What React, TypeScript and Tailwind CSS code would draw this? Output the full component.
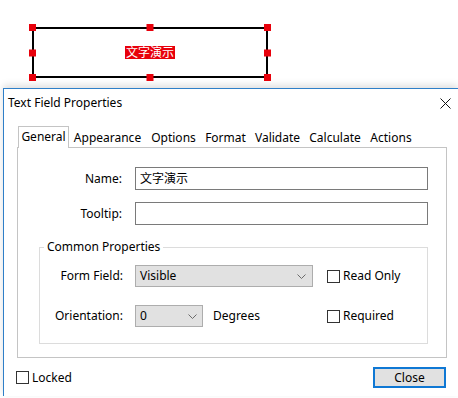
import React from "react";

const font = { fontFamily: '"Segoe UI", "Noto Sans", "Noto Sans CJK SC", sans-serif' };

function Handle({ cls }: { cls: string }) {
  return <div className={`absolute w-[7px] h-[7px] bg-[#e8000b] ${cls}`} />;
}

function Chevron() {
  return (
    <svg width="9" height="5" viewBox="0 0 9 5" className="block">
      <polyline points="0.5,0.5 4.5,4.5 8.5,0.5" fill="none" stroke="#6b6b6b" strokeWidth="1" />
    </svg>
  );
}

function Check() {
  return <div className="w-[13px] h-[13px] border border-[#333333] bg-white shrink-0" />;
}

export default function App() {
  const tabs: [string, number][] = [
    ["Appearance", 77],
    ["Options", 55],
    ["Format", 49],
    ["Validate", 55],
    ["Calculate", 60],
    ["Actions", 52],
  ];
  return (
    <div className="w-[458px] h-[398px] bg-white overflow-hidden text-[12px] text-black" style={font}>
      {/* canvas */}
      <div className="h-[88px] pt-[27px] pl-[32px]">
        <div className="relative w-[236px] h-[51px] border-2 border-black flex items-center justify-center">
          <span className="bg-[#e8000b] text-white leading-[13px] px-[1px]">文字演示</span>
          <Handle cls="-left-[5px] -top-[5px]" />
          <Handle cls="left-1/2 -translate-x-1/2 -top-[5px]" />
          <Handle cls="-right-[5px] -top-[5px]" />
          <Handle cls="-left-[5px] top-1/2 -translate-y-1/2" />
          <Handle cls="-right-[5px] top-1/2 -translate-y-1/2" />
          <Handle cls="-left-[5px] -bottom-[5px]" />
          <Handle cls="left-1/2 -translate-x-1/2 -bottom-[5px]" />
          <Handle cls="-right-[5px] -bottom-[5px]" />
        </div>
      </div>

      {/* dialog */}
      <div className="ml-[3px] w-[455px] h-[308px] border-l border-t border-[#2f7fc8] bg-white shadow-[0_-3px_7px_rgba(0,0,0,0.13)]">
        {/* title bar */}
        <div className="h-[27px] flex items-center pl-[4px] pr-[7px]">
          <span className="flex-1">Text Field Properties</span>
          <svg width="11" height="11" viewBox="0 0 11 11" className="mt-[1px]">
            <path d="M0.5 0.5 L10.5 10.5 M10.5 0.5 L0.5 10.5" stroke="#111" strokeWidth="1" />
          </svg>
        </div>

        {/* tabs */}
        <div className="mt-[10px] ml-[14px] h-[21px] flex items-end">
          <div className="relative z-10 w-[51px] h-[22px] -mb-px border border-b-0 border-[#c4c4c4] bg-white flex justify-center pt-[1px]">
            General
          </div>
          {tabs.map(([t, w]) => (
            <div key={t} className="h-[19px] flex justify-center pt-[1px]" style={{ width: w }}>
              {t}
            </div>
          ))}
        </div>

        {/* panel */}
        <div className="ml-[13px] w-[430px] h-[211px] border border-[#c4c4c4]">
          <div className="mt-[19px] flex items-center">
            <div className="w-[104px] text-right">Name:</div>
            <div className="ml-[13px] w-[293px] h-[23px] border border-[#7a7a7a] flex items-center pl-[4px]">
              文字演示
            </div>
          </div>
          <div className="mt-[12px] flex items-center">
            <div className="w-[104px] text-right">Tooltip:</div>
            <div className="ml-[13px] w-[293px] h-[23px] border border-[#7a7a7a]" />
          </div>

          {/* group box */}
          <div className="relative mt-[22px] ml-[21px] w-[389px] h-[97px] border border-[#dcdcdc]">
            <span className="absolute -top-[9px] left-[4px] px-[3px] bg-white leading-[16px]">Common Properties</span>
            <div className="mt-[17px] flex items-center">
              <div className="w-[83px] text-right">Form Field:</div>
              <div className="ml-[12px] w-[178px] h-[22px] border border-[#adadad] bg-[#e1e1e1] flex items-center pl-[4px] pr-[6px]">
                <span className="flex-1">Visible</span>
                <Chevron />
              </div>
              <div className="ml-[14px] flex items-center">
                <Check />
                <span className="ml-[3px]">Read Only</span>
              </div>
            </div>
            <div className="mt-[18px] flex items-center">
              <div className="w-[83px] text-right">Orientation:</div>
              <div className="ml-[12px] w-[178px] flex items-center">
                <div className="w-[68px] h-[22px] border border-[#adadad] bg-[#e1e1e1] flex items-center pl-[4px] pr-[5px]">
                  <span className="flex-1">0</span>
                  <Chevron />
                </div>
                <span className="ml-[10px]">Degrees</span>
              </div>
              <div className="ml-[14px] flex items-center">
                <Check />
                <span className="ml-[3px]">Required</span>
              </div>
            </div>
          </div>
        </div>

        {/* bottom */}
        <div className="mt-[9px] pl-[12px] pr-[12px] flex items-center">
          <Check />
          <span className="ml-[3px] flex-1">Locked</span>
          <div className="w-[73px] h-[21px] border-2 border-[#0f78d4] bg-[#e1e1e1] flex items-center justify-center">
            Close
          </div>
        </div>
      </div>
    </div>
  );
}
